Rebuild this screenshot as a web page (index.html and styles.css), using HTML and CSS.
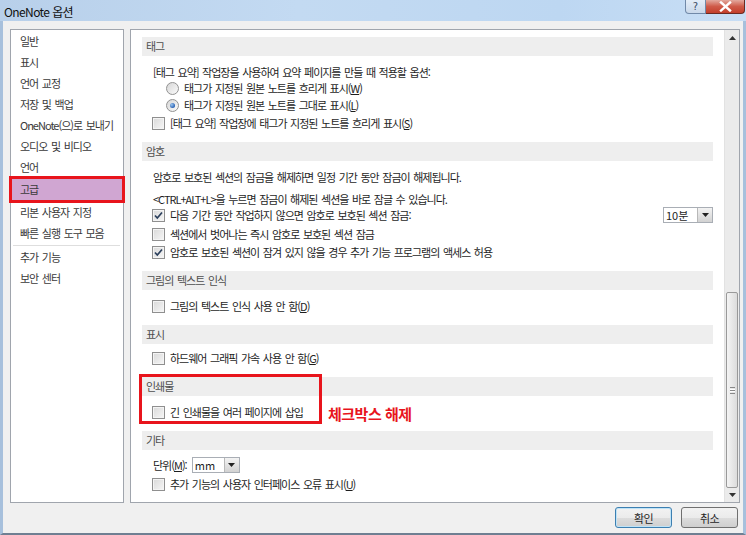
FILE: index.html
```html
<!DOCTYPE html>
<html lang="ko">
<head>
    <meta charset="UTF-8">
    <meta name="viewport" content="width=device-width, initial-scale=1.0">
    <title>OneNote 옵션</title>
    <link rel="stylesheet" href="styles.css">
</head>
<body>
<div class="window">

    <div class="titlebar">
        <span class="title">OneNote 옵션</span>
        <div class="caption">
            <span class="cap-help">?</span>
            <span class="cap-close">
                <svg width="13" height="11" viewBox="0 0 13 11"><path d="M2 1.5 L11 9.5 M11 1.5 L2 9.5" stroke="#fff" stroke-width="2.4" stroke-linecap="square"/></svg>
            </span>
        </div>
    </div>

    <div class="frame">
        <div class="panes">

            <ul class="nav">
                <li>일반</li>
                <li>표시</li>
                <li>언어 교정</li>
                <li>저장 및 백업</li>
                <li>OneNote(으)로 보내기</li>
                <li>오디오 및 비디오</li>
                <li>언어</li>
                <li class="selected">고급</li>
                <li>리본 사용자 지정</li>
                <li>빠른 실행 도구 모음</li>
                <li class="sep"></li>
                <li>추가 기능</li>
                <li>보안 센터</li>
            </ul>

            <div class="main">
                <div class="content">

                    <div class="section">
                        <div class="sec-head">태그</div>
                        <div class="row text mt8">[태그 요약] 작업장을 사용하여 요약 페이지를 만들 때 적용할 옵션:</div>
                        <div class="row indent"><span class="radio"></span>태그가 지정된 원본 노트를 흐리게 표시(<u>W</u>)</div>
                        <div class="row indent mt1"><span class="radio on"></span>태그가 지정된 원본 노트를 그대로 표시(<u>L</u>)</div>
                        <div class="row mt2"><span class="cb"></span>[태그 요약] 작업장에 태그가 지정된 노트를 흐리게 표시(<u>S</u>)</div>
                    </div>

                    <div class="section">
                        <div class="sec-head">암호</div>
                        <div class="row text mt8">암호로 보호된 섹션의 잠금을 해제하면 일정 기간 동안 잠금이 해제됩니다.</div>
                        <div class="row text mt6">&lt;CTRL+ALT+L&gt;을 누르면 잠금이 해제된 섹션을 바로 잠글 수 있습니다.</div>
                        <div class="row">
                            <span class="cb"><svg width="11" height="11" viewBox="0 0 11 11"><path d="M2 5.5 L4.3 8 L9 2.5" fill="none" stroke="#2b3f5c" stroke-width="1.7"/></svg></span>다음 기간 동안 작업하지 않으면 암호로 보호된 섹션 잠금:
                            <span class="combo combo-time"><span class="combo-val">10분</span><span class="combo-btn"><svg width="7" height="4" viewBox="0 0 7 4"><path d="M0 0 H7 L3.5 4 Z" fill="#222"/></svg></span></span>
                        </div>
                        <div class="row mt3"><span class="cb"></span>섹션에서 벗어나는 즉시 암호로 보호된 섹션 잠금</div>
                        <div class="row mt2"><span class="cb"><svg width="11" height="11" viewBox="0 0 11 11"><path d="M2 5.5 L4.3 8 L9 2.5" fill="none" stroke="#2b3f5c" stroke-width="1.7"/></svg></span>암호로 보호된 섹션이 잠겨 있지 않을 경우 추가 기능 프로그램의 액세스 허용</div>
                    </div>

                    <div class="section">
                        <div class="sec-head">그림의 텍스트 인식</div>
                        <div class="row mt8"><span class="cb"></span>그림의 텍스트 인식 사용 안 함(<u>D</u>)</div>
                    </div>

                    <div class="section">
                        <div class="sec-head">표시</div>
                        <div class="row mt6"><span class="cb"></span>하드웨어 그래픽 가속 사용 안 함(<u>G</u>)</div>
                    </div>

                    <div class="section marked">
                        <div class="sec-head">인쇄물</div>
                        <div class="row mt8"><span class="cb"></span>긴 인쇄물을 여러 페이지에 삽입</div>
                        <div class="mark-box"></div>
                        <div class="mark-note">체크박스 해제</div>
                    </div>

                    <div class="section">
                        <div class="sec-head">기타</div>
                        <div class="row text mt7">단위(<u>M</u>):
                            <span class="combo combo-unit"><span class="combo-val">mm</span><span class="combo-btn"><svg width="7" height="4" viewBox="0 0 7 4"><path d="M0 0 H7 L3.5 4 Z" fill="#222"/></svg></span></span>
                        </div>
                        <div class="row mt3"><span class="cb"></span>추가 기능의 사용자 인터페이스 오류 표시(<u>U</u>)</div>
                    </div>

                </div>

                <div class="scrollbar">
                    <div class="sb-arrow"><svg width="7" height="4" viewBox="0 0 7 4"><path d="M0 4 H7 L3.5 0 Z" fill="#333"/></svg></div>
                    <div class="sb-track">
                        <div class="sb-thumb"><span class="grip"></span></div>
                    </div>
                    <div class="sb-arrow"><svg width="7" height="4" viewBox="0 0 7 4"><path d="M0 0 H7 L3.5 4 Z" fill="#333"/></svg></div>
                </div>
            </div>

        </div>

        <div class="buttons">
            <button class="btn default">확인</button>
            <button class="btn">취소</button>
        </div>
    </div>

</div>
</body>
</html>
```

FILE: styles.css
```css
/* 기본 초기화 */
body, ul, li {
    margin: 0;
    padding: 0;
}

body {
    font-family: "Noto Sans CJK KR", sans-serif;
    font-size: 11px;
    letter-spacing: -1px;
    word-spacing: 1.5px;
    color: #1e1e1e;
    background-color: #f0f0f0;
}

.window {
    width: 746px;
    height: 535px;
    display: flex;
    flex-direction: column;
    overflow: hidden;
}

/* 제목 표시줄 */
.titlebar {
    height: 21px;
    flex-shrink: 0;
    display: flex;
    align-items: flex-start;
    background: linear-gradient(90deg, #b8d0ea 0%, #c3daf2 40%, #bdd7f2 75%, #c8def5 100%);
}

.title {
    padding: 3px 0 0 4px;
    font-size: 12px;
    letter-spacing: -0.6px;
    word-spacing: 0;
    color: #101010;
}

.caption {
    margin-left: auto;
    margin-right: 1px;
    display: flex;
}

.cap-help {
    width: 19px;
    height: 13px;
    border: 1px solid #7189a8;
    border-top: none;
    border-radius: 0 0 0 4px;
    background: linear-gradient(#e4edf7, #c9d8ea);
    color: #3b4d66;
    font-family: "DejaVu Sans", sans-serif;
    font-size: 10px;
    line-height: 13px;
    text-align: center;
    letter-spacing: 0;
}

.cap-close {
    width: 38px;
    height: 13px;
    border: 1px solid #6b2a22;
    border-top: none;
    border-left: none;
    border-radius: 0 0 4px 0;
    background: linear-gradient(#e3a99e, #cf5a48 50%, #c33f2c);
    display: flex;
    align-items: center;
    justify-content: center;
}

/* 창 본문 */
.frame {
    flex: 1;
    display: flex;
    flex-direction: column;
    padding: 8px 3px 0 7px;
    border-left: 3px solid #a7c0dc;
    border-right: 3px solid #a7c0dc;
    border-bottom: 2px solid #6f7f92;
}

.panes {
    height: 474px;
    display: flex;
    gap: 6px;
}

/* 왼쪽 목록 */
.nav {
    width: 112px;
    border: 1px solid #a0a5ad;
    background-color: #fff;
    list-style: none;
    padding-top: 1px;
    color: #3a3a3a;
}

.nav li {
    height: 21px;
    line-height: 21px;
    padding-left: 9px;
}

.nav li.selected {
    margin: 1px 1px 2px 1px;
    padding-left: 8px;
    background-color: #d0a6d2;
    outline: 3px solid #e8141c;
}

.nav li.sep {
    height: 1px;
    margin: 1px 3px 1px 2px;
    padding: 0;
    background-color: #dedede;
}

/* 오른쪽 옵션 영역 */
.main {
    flex: 1;
    display: flex;
    border: 1px solid #a0a5ad;
    background-color: #fff;
}

.content {
    flex: 1;
    padding-top: 7px;
}

.section {
    margin: 0 11px 11px 11px;
}

.sec-head {
    height: 19px;
    line-height: 19px;
    padding-left: 4px;
    background-color: #eeeeee;
    color: #4e4e4e;
}

.row {
    height: 16px;
    display: flex;
    align-items: center;
    padding-left: 10px;
    white-space: nowrap;
}

.row.text {
    padding-left: 11px;
}

.row.indent {
    padding-left: 24px;
}

.mt1 { margin-top: 1px; }
.mt2 { margin-top: 2px; }
.mt3 { margin-top: 3px; }
.mt6 { margin-top: 6px; }
.mt7 { margin-top: 7px; }
.mt8 { margin-top: 8px; }

u {
    text-decoration-thickness: 1px;
    text-underline-offset: 1px;
}

/* 체크박스와 라디오 */
.cb {
    width: 11px;
    height: 11px;
    margin-right: 5px;
    border: 1px solid #8f8f8f;
    background: linear-gradient(135deg, #d9d9d9, #f6f6f6);
    box-shadow: inset 0 0 0 1px #f4f4f4;
    display: flex;
    flex-shrink: 0;
}

.radio {
    width: 11px;
    height: 11px;
    margin-right: 5px;
    border: 1px solid #929292;
    border-radius: 50%;
    background: linear-gradient(135deg, #d6d6d6, #fbfbfb);
    position: relative;
    flex-shrink: 0;
}

.radio.on::after {
    content: "";
    position: absolute;
    left: 3px;
    top: 3px;
    width: 5px;
    height: 5px;
    border-radius: 50%;
    background: radial-gradient(circle at 35% 35%, #9cc7f0, #2b62b3 70%);
}

/* 드롭다운 */
.combo {
    height: 14px;
    display: flex;
    border: 1px solid #a9aeb5;
    background-color: #fff;
    word-spacing: 0;
}

.combo-time {
    width: 48px;
    margin-left: auto;
}

.combo-unit {
    width: 46px;
    margin-left: 5px;
}

.combo-val {
    flex: 1;
    padding-left: 2px;
    line-height: 14px;
    letter-spacing: 0;
}

.combo-btn {
    width: 14px;
    border-left: 1px solid #b8b8b8;
    background: linear-gradient(#f3f3f3, #d2d2d2);
    display: flex;
    align-items: center;
    justify-content: center;
}

/* 강조 표시 */
.marked {
    position: relative;
}

.mark-box {
    position: absolute;
    left: -3px;
    top: -3px;
    width: 177px;
    height: 44px;
    border: 3px solid #e8141c;
}

.mark-note {
    position: absolute;
    left: 186px;
    top: 26px;
    font-size: 15px;
    font-weight: bold;
    letter-spacing: -0.5px;
    word-spacing: 0;
    color: #e8141c;
}

/* 스크롤바 */
.scrollbar {
    width: 14px;
    display: flex;
    flex-direction: column;
    background-color: #ebebeb;
    border-left: 1px solid #e2e2e2;
}

.sb-arrow {
    height: 14px;
    display: flex;
    align-items: center;
    justify-content: center;
}

.sb-arrow:first-child {
    height: 15px;
}

.sb-track {
    flex: 1;
    display: flex;
    flex-direction: column;
    justify-content: flex-end;
    padding: 0 1px;
}

.sb-thumb {
    height: 194px;
    border: 1px solid #999;
    border-radius: 2px;
    background: linear-gradient(90deg, #f4f4f4, #dcdcdc);
    display: flex;
    align-items: center;
    justify-content: center;
}

.grip {
    width: 5px;
    height: 5px;
    border-top: 1px solid #888;
    border-bottom: 1px solid #888;
    background: linear-gradient(#fff 0 1px, #888 1px 2px, #fff 2px 3px);
    background-size: 100% 3px;
    background-position: 0 1px;
    background-repeat: no-repeat;
}

/* 아래쪽 버튼 */
.buttons {
    display: flex;
    justify-content: flex-end;
    gap: 9px;
    margin-top: 4px;
    padding-right: 2px;
}

.btn {
    width: 57px;
    height: 21px;
    padding: 0;
    border: 1px solid #707070;
    border-radius: 3px;
    background: linear-gradient(#f2f2f2 0%, #ebebeb 50%, #dddddd 51%, #cfcfcf 100%);
    font-family: "Noto Sans CJK KR", sans-serif;
    font-size: 11px;
    letter-spacing: -0.5px;
    color: #1e1e1e;
}

.btn.default {
    border-color: #3c7fb1;
    box-shadow: inset 0 0 0 1px #bfe3f7;
}
```
